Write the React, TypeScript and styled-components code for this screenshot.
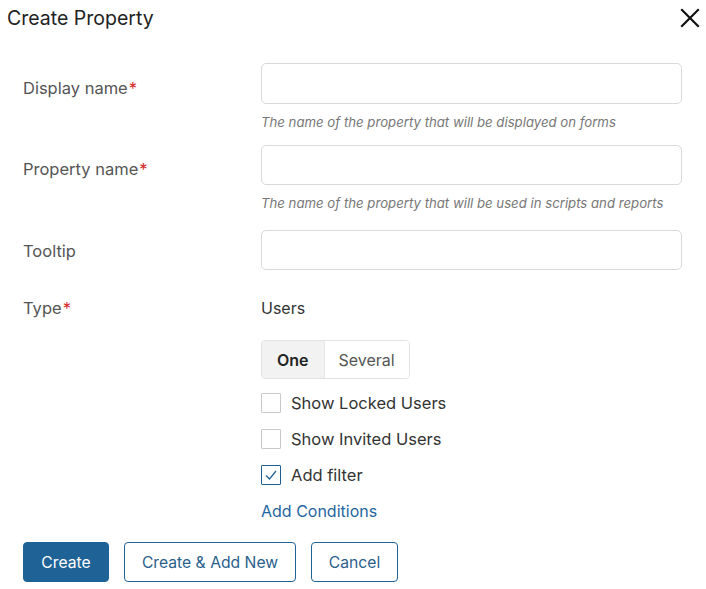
import React from "react";
import styled, { createGlobalStyle } from "styled-components";

const Global = createGlobalStyle`
  html, body { margin: 0; padding: 0; background: #fff; }
  body { font-family: Inter, "Noto Sans", sans-serif; -webkit-font-smoothing: antialiased; }
  * { box-sizing: border-box; }
`;

const Dialog = styled.div`
  width: 706px;
  height: 589px;
  background: #fff;
  display: flex;
  flex-direction: column;
`;

const Header = styled.div`
  display: flex;
  align-items: center;
  justify-content: space-between;
  height: 36px;
  padding: 0 4px 0 7px;
`;

const Title = styled.h1`
  margin: 0;
  font-size: 19.5px;
  font-weight: 400;
  color: #222;
`;

const CloseButton = styled.button`
  border: none;
  background: none;
  padding: 0;
  width: 24px;
  height: 24px;
  display: flex;
  align-items: center;
  justify-content: center;
  cursor: pointer;
`;

const Form = styled.div`
  display: flex;
  flex-direction: column;
  padding: 27px 24px 0 23px;
`;

const Row = styled.div<{ $mb: number }>`
  display: grid;
  grid-template-columns: 238px 421px;
  align-items: start;
  margin-bottom: ${(p) => p.$mb}px;
`;

const Label = styled.div<{ $pt: number }>`
  padding-top: ${(p) => p.$pt}px;
  font-size: 16.5px;
  line-height: 20px;
  color: #555;
`;

const Req = styled.span`
  color: #d42c2c;
  margin-left: 1px;
`;

const Field = styled.div`
  display: flex;
  flex-direction: column;
`;

const Input = styled.input<{ $h: number }>`
  width: 421px;
  height: ${(p) => p.$h}px;
  border: 1px solid #d9d9d9;
  border-radius: 5px;
  padding: 0 12px;
  font-family: inherit;
  font-size: 15px;
  outline: none;
`;

const Hint = styled.div`
  margin-top: 10px;
  font-size: 13.2px;
  line-height: 16px;
  font-style: italic;
  color: #777;
`;

const Value = styled.div`
  font-size: 16px;
  line-height: 20px;
  color: #333;
`;

const Segmented = styled.div`
  display: inline-flex;
  margin-top: 22px;
  height: 39px;
  border: 1px solid #e2e2e2;
  border-radius: 4px;
  overflow: hidden;
  align-self: flex-start;
`;

const Segment = styled.button<{ $active?: boolean }>`
  border: none;
  margin: 0;
  font-family: inherit;
  font-size: 16px;
  padding: 0 ${(p) => (p.$active ? 15 : 14)}px;
  background: ${(p) => (p.$active ? "#f2f2f2" : "#fff")};
  font-weight: ${(p) => (p.$active ? 600 : 400)};
  color: ${(p) => (p.$active ? "#222" : "#555")};
  border-left: ${(p) => (p.$active ? "none" : "1px solid #e6e6e6")};
`;

const Checks = styled.div`
  display: flex;
  flex-direction: column;
  margin-top: 14px;
`;

const CheckRow = styled.label<{ $mt: number }>`
  display: flex;
  align-items: center;
  gap: 10px;
  margin-top: ${(p) => p.$mt}px;
  font-size: 16.5px;
  line-height: 20px;
  color: #333;
`;

const Box = styled.span<{ $checked?: boolean }>`
  width: 20px;
  height: 20px;
  border: 1px solid ${(p) => (p.$checked ? "#1e5f91" : "#c9c9c9")};
  border-radius: 1px;
  display: flex;
  align-items: center;
  justify-content: center;
  background: #fff;
`;

const Link = styled.a`
  margin-top: 16px;
  font-size: 16px;
  line-height: 20px;
  color: #1f66a0;
  text-decoration: none;
  cursor: pointer;
`;

const Footer = styled.div`
  display: flex;
  gap: 15px;
  padding: 21px 0 0 23px;
`;

const Button = styled.button<{ $primary?: boolean; $w: number }>`
  width: ${(p) => p.$w}px;
  height: 40px;
  border-radius: 4px;
  border: 1px solid #1f6396;
  background: ${(p) => (p.$primary ? "#1f6396" : "#fff")};
  color: ${(p) => (p.$primary ? "#fff" : "#2a5f8c")};
  font-family: inherit;
  font-size: 15.7px;
  padding: 0;
  cursor: pointer;
`;

export default function App() {
  return (
    <>
      <Global />
      <Dialog>
        <Header>
          <Title>Create Property</Title>
          <CloseButton aria-label="Close">
            <svg width="20" height="20" viewBox="0 0 20 20">
              <path d="M2 2L18 18M18 2L2 18" stroke="#111" strokeWidth="2.2" strokeLinecap="square" />
            </svg>
          </CloseButton>
        </Header>
        <Form>
          <Row $mb={15}>
            <Label $pt={15}>
              Display name<Req>*</Req>
            </Label>
            <Field>
              <Input $h={41} />
              <Hint>The name of the property that will be displayed on forms</Hint>
            </Field>
          </Row>
          <Row $mb={19}>
            <Label $pt={14}>
              Property name<Req>*</Req>
            </Label>
            <Field>
              <Input $h={40} />
              <Hint>The name of the property that will be used in scripts and reports</Hint>
            </Field>
          </Row>
          <Row $mb={28}>
            <Label $pt={11}>Tooltip</Label>
            <Field>
              <Input $h={40} />
            </Field>
          </Row>
          <Row $mb={0}>
            <Label $pt={0}>
              Type<Req>*</Req>
            </Label>
            <Field>
              <Value>Users</Value>
              <Segmented>
                <Segment $active>One</Segment>
                <Segment>Several</Segment>
              </Segmented>
              <Checks>
                <CheckRow $mt={0}>
                  <Box />
                  Show Locked Users
                </CheckRow>
                <CheckRow $mt={16}>
                  <Box />
                  Show Invited Users
                </CheckRow>
                <CheckRow $mt={16}>
                  <Box $checked>
                    <svg width="14" height="14" viewBox="0 0 14 14">
                      <path d="M2 7.5L5.5 11L12 3" fill="none" stroke="#1e5f91" strokeWidth="1.2" />
                    </svg>
                  </Box>
                  Add filter
                </CheckRow>
              </Checks>
              <Link>Add Conditions</Link>
            </Field>
          </Row>
        </Form>
        <Footer>
          <Button $primary $w={86}>Create</Button>
          <Button $w={172}>Create &amp; Add New</Button>
          <Button $w={87}>Cancel</Button>
        </Footer>
      </Dialog>
    </>
  );
}
